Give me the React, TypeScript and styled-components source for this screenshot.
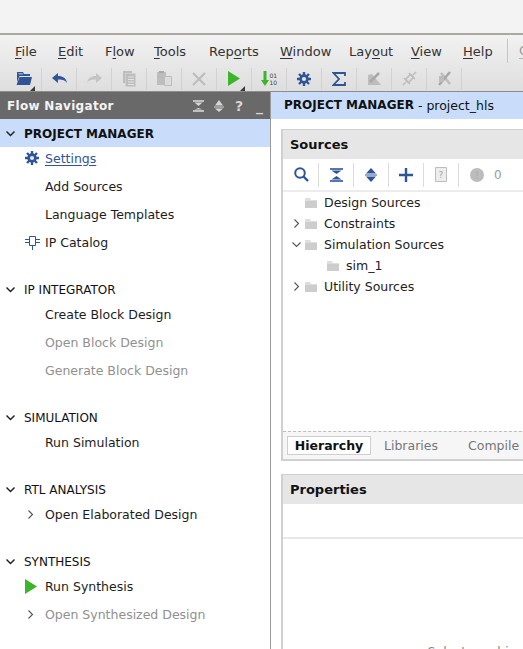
import React from "react";
import styled, { createGlobalStyle } from "styled-components";

const BLUE = "#2f5597";
const GREY = "#bdbdbd";

const GlobalStyle = createGlobalStyle`
  html, body {
    margin: 0;
    padding: 0;
    height: 100%;
    overflow: hidden;
    background: #fff;
    font-family: "DejaVu Sans", sans-serif;
  }
  #root { height: 100%; }
`;

const Icon = ({ children, w = 16, h = 16 }: { children: React.ReactNode; w?: number; h?: number }) => (
  <svg width={w} height={h} viewBox={`0 0 ${w} ${h}`} style={{ display: "block" }}>
    {children}
  </svg>
);

const OpenIcon = () => (
  <Icon w={16} h={15}>
    <path d="M1 1h6l1 2h6v2H3.500L1 11z" fill={BLUE} />
    <path d="M3.500 6H16l-2 8H0.500z" fill={BLUE} />
    <path d="M2 2h4.500l.7 1.500H3z" fill="#8fa8d0" />
  </Icon>
);
const UndoIcon = ({ color, flip }: { color: string; flip?: boolean }) => (
  <Icon w={15} h={11}>
    <path
      d={flip ? "M15 5L9 0v3C4 3 1 5 0 10c2-3 5-3.600 9-3.400V10z" : "M0 5l6-5v3c5 0 8 2 9 7-2-3-5-3.600-9-3.400V10z"}
      fill={color}
    />
  </Icon>
);
const CopyIcon = () => (
  <Icon w={13} h={16}>
    <path d="M0 0h9v2H2v10H0z" fill={GREY} />
    <path d="M2.500 2.500h10v13h-10z" fill={GREY} />
    <path d="M5 6h6M5 8.500h6M5 11h6M5 13.500h6" stroke="#e4e4e4" strokeWidth="1" />
  </Icon>
);
const PasteIcon = () => (
  <Icon w={15} h={15}>
    <path d="M0 1h9v13H0z" fill={GREY} />
    <path d="M2 0h5v2H2z" fill="#a9a9a9" />
    <path d="M7.500 5.500h7v9h-7z" fill="#dcdcdc" stroke={GREY} />
  </Icon>
);
const CrossIcon = () => (
  <Icon w={14} h={14}>
    <path d="M1 1l12 12M13 1L1 13" stroke={GREY} strokeWidth="2.200" />
  </Icon>
);
const PlayIcon = ({ w = 12, h = 15 }: { w?: number; h?: number }) => (
  <Icon w={w} h={h}>
    <path d={`M0 0L${w} ${h / 2}L0 ${h}z`} fill="#3cb52a" />
  </Icon>
);
const BitIcon = () => (
  <Icon w={16} h={16}>
    <path d="M2.500 0h3v9H8l-4 6-4-6h2.500z" fill="#3cb52a" />
    <text x="8.500" y="7" fontSize="6" fontFamily="DejaVu Sans" fill="#444">01</text>
    <text x="8.500" y="14" fontSize="6" fontFamily="DejaVu Sans" fill="#444">10</text>
  </Icon>
);
const GearIcon = ({ size = 14 }: { size?: number }) => (
  <svg width={size} height={size} viewBox="0 0 14 14" style={{ display: "block" }}>
    <g stroke={BLUE} strokeWidth="2.400">
      <path d="M7 0v14M0 7h14M2 2l10 10M12 2L2 12" />
    </g>
    <circle cx="7" cy="7" r="4.700" fill={BLUE} />
    <circle cx="7" cy="7" r="2.100" fill="#e6e6e6" />
  </svg>
);
const SigmaIcon = () => (
  <Icon w={14} h={14}>
    <path d="M13 4V1H1.500L7 7l-5.500 6H13v-3" fill="none" stroke={BLUE} strokeWidth="1.800" />
  </Icon>
);
const ProbeIcon = ({ kind }: { kind: number }) => (
  <Icon w={15} h={15}>
    {kind === 0 && (
      <>
        <path d="M1 14V4l4-1 9 11z" fill={GREY} />
        <path d="M3 11l9-9" stroke="#a8a8a8" strokeWidth="2.500" />
      </>
    )}
    {kind === 1 && (
      <>
        <path d="M3.500 8.500l5-5 3 3-5 5z" fill="none" stroke={GREY} strokeWidth="1.600" />
        <path d="M1 14l3-3M11 4l3-3M2 7l6 6M7 2l6 6" stroke={GREY} strokeWidth="1.500" />
      </>
    )}
    {kind === 2 && (
      <>
        <path d="M4 2l9 11" stroke={GREY} strokeWidth="2.500" />
        <path d="M13 1L2 14" stroke="#a8a8a8" strokeWidth="2.500" />
        <path d="M2 5h5v6H2z" fill={GREY} />
      </>
    )}
  </Icon>
);
const CollapseIcon = ({ color, w = 13, h = 14 }: { color: string; w?: number; h?: number }) => (
  <Icon w={w} h={h}>
    <path d={`M0 1H${w}`} stroke={color} strokeWidth="1.600" />
    <path d={`M1.500 2.500H${w - 1.5}L${w / 2} 6z`} fill={color} />
    <path d={`M${w / 2} 8L${w - 1.5} ${h - 2.5}H1.500z`} fill={color} />
    <path d={`M0 ${h - 1}H${w}`} stroke={color} strokeWidth="1.600" />
  </Icon>
);
const ExpandIcon = ({ color, w = 12, h = 14 }: { color: string; w?: number; h?: number }) => (
  <Icon w={w} h={h}>
    <path d={`M${w / 2} 0L${w - 1} 5.500H1z`} fill={color} />
    <path d={`M0 7H${w}`} stroke={color} strokeWidth="1" />
    <path d={`M1 8.500H${w - 1}L${w / 2} ${h}z`} fill={color} />
  </Icon>
);
const SearchIcon = () => (
  <Icon w={15} h={15}>
    <circle cx="6" cy="6" r="4.800" fill="none" stroke={BLUE} strokeWidth="2" />
    <path d="M9.500 9.500L14 14" stroke={BLUE} strokeWidth="2.400" />
  </Icon>
);
const PlusIcon = () => (
  <Icon w={14} h={14}>
    <path d="M7 0v14M0 7h14" stroke={BLUE} strokeWidth="2.400" />
  </Icon>
);
const DocIcon = () => (
  <Icon w={12} h={15}>
    <path d="M0.500 0.500h11v14h-11z" fill="#ededed" stroke={GREY} />
    <text x="3.500" y="11" fontSize="9" fontFamily="DejaVu Sans" fill="#a5a5a5">?</text>
  </Icon>
);
const AlertIcon = () => (
  <Icon w={14} h={14}>
    <circle cx="7" cy="7" r="7" fill="#bcbcbc" />
    <path d="M7 3v5M7 9.500v1.500" stroke="#b0b0b0" strokeWidth="1.500" />
  </Icon>
);
const ChipIcon = () => (
  <Icon w={15} h={15}>
    <path d="M4.500 1.500h6v9h-6z" fill="#fff" stroke={BLUE} strokeWidth="1" />
    <path d="M0 4.500h4M0 7.500h4M11 4.500h4M11 7.500h4M7.500 11v4" stroke={BLUE} strokeWidth="1" />
  </Icon>
);
const FolderIcon = () => (
  <Icon w={12} h={11}>
    <path d="M0 1h5l1 2h6v8H0z" fill="#dedede" />
    <path d="M0 4h12v7H0z" fill="#cdcdcd" />
  </Icon>
);
const Chevron = ({ open, bold }: { open?: boolean; bold?: boolean }) => (
  <Icon w={9} h={9}>
    <path
      d={open ? "M0.500 2.500L4.500 6.500L8.500 2.500" : "M2.500 0.500L6.500 4.500L2.500 8.500"}
      fill="none"
      stroke={bold ? "#222" : "#555"}
      strokeWidth={bold ? 1.500 : 1.100}
    />
  </Icon>
);

const Page = styled.div`
  width: 523px;
  height: 649px;
  display: flex;
  flex-direction: column;
  overflow: hidden;
`;
const TitleBand = styled.div`
  height: 33px;
  flex: none;
  background: #f3f3f3;
  border-bottom: 2px solid #a9a9a2;
`;
const Chrome = styled.div`
  height: 57px;
  flex: none;
  background: linear-gradient(#f2f2f2, #dedede);
  border-bottom: 1px solid #8c8c8c;
  box-sizing: border-box;
  display: flex;
  flex-direction: column;
`;
const MenuBar = styled.div`
  height: 32px;
  flex: none;
  display: flex;
  align-items: center;
  padding-left: 15px;
  font-size: 13px;
  color: #333;
`;
const MenuItem = styled.span<{ $w: number }>`
  flex: none;
  width: ${(p) => p.$w}px;
  u { text-underline-offset: 2px; }
`;
const MenuDivider = styled.span`
  flex: none;
  width: 1px;
  height: 24px;
  background: #c6c6c6;
  margin-right: 11px;
`;
const SearchStub = styled.span`
  color: #9a9a9a;
  border-bottom: 1px solid #b5b5b5;
`;
const ToolRow = styled.div`
  height: 23px;
  flex: none;
  display: flex;
  align-items: center;
  padding-left: 7px;
`;
const ToolCell = styled.div<{ $menu?: boolean }>`
  width: 35px;
  height: 22px;
  flex: none;
  box-sizing: border-box;
  border-right: 1px solid #d2d2d2;
  display: flex;
  align-items: center;
  justify-content: center;
  position: relative;
  &::after {
    content: "";
    display: ${(p) => (p.$menu ? "block" : "none")};
    position: absolute;
    right: 6px;
    bottom: -1px;
    border-style: solid;
    border-width: 0 0 5px 5px;
    border-color: transparent transparent #3a3a3a transparent;
  }
`;
const Body = styled.div`
  flex: 1;
  min-height: 0;
  display: flex;
`;
const Navigator = styled.aside`
  width: 271px;
  flex: none;
  box-sizing: border-box;
  border-right: 1px solid #9a9a9a;
  overflow: hidden;
`;
const NavHead = styled.div`
  height: 27px;
  box-sizing: border-box;
  background: #696969;
  color: #f4f4f4;
  display: flex;
  align-items: center;
  padding-left: 7px;
  font-size: 12px;
  font-weight: bold;
  letter-spacing: 0.3px;
`;
const NavTitle = styled.span`
  flex: 1;
`;
const NavAction = styled.span`
  width: 20.500px;
  display: flex;
  justify-content: center;
  font-size: 14px;
  color: #d6d6d6;
`;
const Section = styled.section`
  margin-bottom: 22px;
`;
const SectionHead = styled.div<{ $selected?: boolean; $bold?: boolean }>`
  height: 28px;
  box-sizing: border-box;
  padding: 1px 0 0 6px;
  display: flex;
  align-items: center;
  gap: 9px;
  font-size: 12px;
  color: #111;
  font-weight: ${(p) => (p.$bold ? "bold" : "normal")};
  background: ${(p) => (p.$selected ? "#c9ddfb" : "transparent")};
`;
const NavList = styled.div`
  display: flex;
  flex-direction: column;
  gap: 6px;
`;
const NavItem = styled.div<{ $disabled?: boolean; $link?: boolean }>`
  height: 22px;
  display: flex;
  align-items: center;
  font-size: 12.500px;
  color: ${(p) => (p.$disabled ? "#909090" : p.$link ? BLUE : "#1c1c1c")};
  text-decoration: ${(p) => (p.$link ? "underline" : "none")};
  text-underline-offset: 2px;
`;
const NavSlot = styled.span`
  width: 45px;
  flex: none;
  box-sizing: border-box;
  padding-left: 25px;
  display: flex;
  align-items: center;
`;
const NavChevron = styled.span`
  margin-left: 1px;
`;
const Main = styled.main`
  flex: 1;
  min-width: 0;
  overflow: hidden;
`;
const MainHead = styled.div`
  height: 27px;
  box-sizing: border-box;
  background: #c9ddfb;
  display: flex;
  align-items: center;
  padding: 0 0 1px 13px;
  font-size: 12.500px;
  color: #111;
  white-space: pre;
  b { font-weight: bold; font-size: 12px; }
`;
const Content = styled.div`
  padding: 10px 0 0 10px;
  width: 514px;
  box-sizing: border-box;
  display: flex;
  flex-direction: column;
  gap: 13px;
`;
const Card = styled.div<{ $h: number }>`
  height: ${(p) => p.$h}px;
  box-sizing: border-box;
  border: 2px solid #d0d0d0;
  border-width: 1px 2px 2px 2px;
  display: flex;
  flex-direction: column;
  overflow: hidden;
`;
const CardTitle = styled.div`
  height: 29px;
  flex: none;
  background: #e6e6e6;
  display: flex;
  align-items: center;
  padding-left: 7px;
  font-size: 13px;
  font-weight: bold;
  color: #111;
`;
const CardTools = styled.div`
  height: 33px;
  flex: none;
  border-bottom: 2px solid #ececec;
  box-sizing: border-box;
  display: flex;
  align-items: center;
  padding-left: 1px;
`;
const CardTool = styled.div<{ $plain?: boolean }>`
  width: 35px;
  height: 24px;
  flex: none;
  box-sizing: border-box;
  display: flex;
  align-items: center;
  justify-content: center;
  border-right: ${(p) => (p.$plain ? "none" : "1px solid #dcdcdc")};
`;
const Count = styled.span`
  font-size: 12px;
  color: #9a9a9a;
`;
const Tree = styled.div`
  flex: 1;
  display: flex;
  flex-direction: column;
`;
const TreeRow = styled.div<{ $depth?: number }>`
  height: 21px;
  display: flex;
  align-items: center;
  padding-left: ${(p) => 9 + (p.$depth ?? 0) * 22}px;
  font-size: 12.500px;
  color: #222;
`;
const Twisty = styled.span`
  width: 13px;
  flex: none;
  display: flex;
`;
const FolderSlot = styled.span`
  width: 19px;
  flex: none;
  display: flex;
`;
const TabBar = styled.div`
  height: 27px;
  flex: none;
  border-top: 1px dashed #bdbdbd;
  background: #f6f6f6;
  display: flex;
  align-items: center;
  padding-left: 4px;
  gap: 13px;
  font-size: 12.500px;
`;
const Tab = styled.span<{ $active?: boolean }>`
  box-sizing: border-box;
  width: ${(p) => (p.$active ? "84px" : "auto")};
  height: ${(p) => (p.$active ? "19px" : "auto")};
  display: flex;
  align-items: center;
  justify-content: center;
  white-space: nowrap;
  font-weight: ${(p) => (p.$active ? "bold" : "normal")};
  color: ${(p) => (p.$active ? "#111" : "#777")};
  background: ${(p) => (p.$active ? "#fff" : "transparent")};
  border: ${(p) => (p.$active ? "1px solid #cfcfcf" : "none")};
  margin-right: ${(p) => (p.$active ? "0" : "17px")};
`;
const BlankStrip = styled.div`
  height: 33px;
  flex: none;
  border-bottom: 2px solid #e8e8e8;
`;
const Hint = styled.div`
  flex: 1;
  display: flex;
  justify-content: center;
  align-items: flex-start;
  padding-top: 105px;
  font-size: 12.500px;
  color: #888;
  white-space: nowrap;
`;

const sections: {
  title: string;
  selected?: boolean;
  items: { label: string; icon?: React.ReactNode; disabled?: boolean; link?: boolean }[];
}[] = [
  {
    title: "PROJECT MANAGER",
    selected: true,
    items: [
      { label: "Settings", icon: <GearIcon />, link: true },
      { label: "Add Sources" },
      { label: "Language Templates" },
      { label: "IP Catalog", icon: <ChipIcon /> },
    ],
  },
  {
    title: "IP INTEGRATOR",
    items: [
      { label: "Create Block Design" },
      { label: "Open Block Design", disabled: true },
      { label: "Generate Block Design", disabled: true },
    ],
  },
  { title: "SIMULATION", items: [{ label: "Run Simulation" }] },
  {
    title: "RTL ANALYSIS",
    items: [{ label: "Open Elaborated Design", icon: <NavChevron><Chevron /></NavChevron> }],
  },
  {
    title: "SYNTHESIS",
    items: [
      { label: "Run Synthesis", icon: <PlayIcon /> },
      { label: "Open Synthesized Design", disabled: true, icon: <NavChevron><Chevron /></NavChevron> },
    ],
  },
];

const menus: [React.ReactNode, number][] = [
  [<><u>F</u>ile</>, 43],
  [<><u>E</u>dit</>, 47],
  [<>F<u>l</u>ow</>, 49],
  [<><u>T</u>ools</>, 55],
  [<>Rep<u>o</u>rts</>, 71],
  [<><u>W</u>indow</>, 69],
  [<>Lay<u>o</u>ut</>, 62],
  [<><u>V</u>iew</>, 52],
  [<><u>H</u>elp</>, 44],
];

const tools: { icon: React.ReactNode; menu?: boolean }[] = [
  { icon: <OpenIcon />, menu: true },
  { icon: <UndoIcon color={BLUE} /> },
  { icon: <UndoIcon color="#c4c4c4" flip /> },
  { icon: <CopyIcon /> },
  { icon: <PasteIcon /> },
  { icon: <CrossIcon /> },
  { icon: <PlayIcon />, menu: true },
  { icon: <BitIcon /> },
  { icon: <GearIcon /> },
  { icon: <SigmaIcon /> },
  { icon: <ProbeIcon kind={0} /> },
  { icon: <ProbeIcon kind={1} /> },
  { icon: <ProbeIcon kind={2} /> },
];

export default function App() {
  return (
    <Page>
      <GlobalStyle />
      <TitleBand />
      <Chrome>
        <MenuBar>
          {menus.map(([label, w], i) => (
            <MenuItem key={i} $w={w}>
              {label}
            </MenuItem>
          ))}
          <MenuDivider />
          <SearchStub>Q</SearchStub>
        </MenuBar>
        <ToolRow>
          {tools.map((t, i) => (
            <ToolCell key={i} $menu={t.menu}>
              {t.icon}
            </ToolCell>
          ))}
        </ToolRow>
      </Chrome>
      <Body>
        <Navigator>
          <NavHead>
            <NavTitle>Flow Navigator</NavTitle>
            <NavAction><CollapseIcon color="#d6d6d6" w={11} h={12} /></NavAction>
            <NavAction><ExpandIcon color="#d6d6d6" w={10} h={12} /></NavAction>
            <NavAction>?</NavAction>
            <NavAction>_</NavAction>
          </NavHead>
          {sections.map((s) => (
            <Section key={s.title}>
              <SectionHead $selected={s.selected} $bold={s.selected}>
                <Chevron open bold />
                {s.title}
              </SectionHead>
              <NavList>
                {s.items.map((item) => (
                  <NavItem key={item.label} $disabled={item.disabled} $link={item.link}>
                    <NavSlot>{item.icon}</NavSlot>
                    {item.label}
                  </NavItem>
                ))}
              </NavList>
            </Section>
          ))}
        </Navigator>
        <Main>
          <MainHead>
            <b>PROJECT MANAGER</b> - project_hls
          </MainHead>
          <Content>
            <Card $h={332}>
              <CardTitle>Sources</CardTitle>
              <CardTools>
                <CardTool><SearchIcon /></CardTool>
                <CardTool><CollapseIcon color={BLUE} /></CardTool>
                <CardTool><ExpandIcon color={BLUE} /></CardTool>
                <CardTool><PlusIcon /></CardTool>
                <CardTool><DocIcon /></CardTool>
                <CardTool $plain>
                  <AlertIcon />
                </CardTool>
                <Count>0</Count>
              </CardTools>
              <Tree>
                <TreeRow>
                  <Twisty />
                  <FolderSlot><FolderIcon /></FolderSlot>
                  Design Sources
                </TreeRow>
                <TreeRow>
                  <Twisty><Chevron /></Twisty>
                  <FolderSlot><FolderIcon /></FolderSlot>
                  Constraints
                </TreeRow>
                <TreeRow>
                  <Twisty><Chevron open /></Twisty>
                  <FolderSlot><FolderIcon /></FolderSlot>
                  Simulation Sources
                </TreeRow>
                <TreeRow $depth={1}>
                  <Twisty />
                  <FolderSlot><FolderIcon /></FolderSlot>
                  sim_1
                </TreeRow>
                <TreeRow>
                  <Twisty><Chevron /></Twisty>
                  <FolderSlot><FolderIcon /></FolderSlot>
                  Utility Sources
                </TreeRow>
              </Tree>
              <TabBar>
                <Tab $active>Hierarchy</Tab>
                <Tab>Libraries</Tab>
                <Tab>Compile Order</Tab>
              </TabBar>
            </Card>
            <Card $h={200}>
              <CardTitle>Properties</CardTitle>
              <BlankStrip />
              <Hint>Select an object to see properties</Hint>
            </Card>
          </Content>
        </Main>
      </Body>
    </Page>
  );
}
